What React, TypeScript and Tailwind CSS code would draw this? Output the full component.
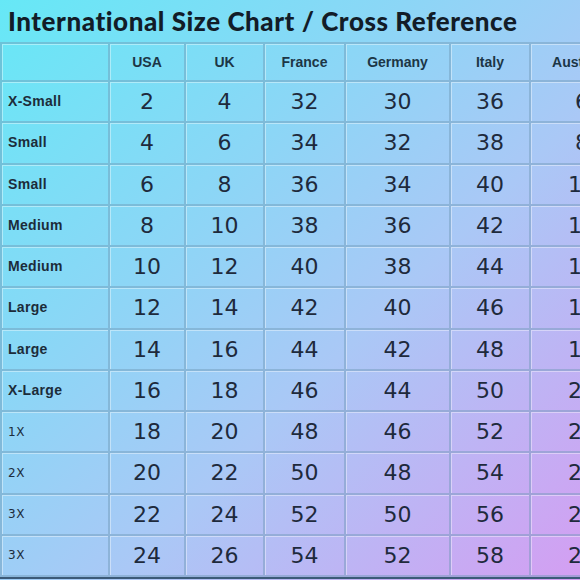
import React from "react";

const columns = ["USA", "UK", "France", "Germany", "Italy", "Australia"];

const rows: [string, number[]][] = [
  ["X-Small", [2, 4, 32, 30, 36, 6]],
  ["Small", [4, 6, 34, 32, 38, 8]],
  ["Small", [6, 8, 36, 34, 40, 10]],
  ["Medium", [8, 10, 38, 36, 42, 12]],
  ["Medium", [10, 12, 40, 38, 44, 14]],
  ["Large", [12, 14, 42, 40, 46, 16]],
  ["Large", [14, 16, 44, 42, 48, 18]],
  ["X-Large", [16, 18, 46, 44, 50, 20]],
  ["1X", [18, 20, 48, 46, 52, 22]],
  ["2X", [20, 22, 50, 48, 54, 24]],
  ["3X", [22, 24, 52, 50, 56, 26]],
  ["3X", [24, 26, 54, 52, 58, 28]],
];

const cell =
  "flex items-center border-r-2 border-b-2 border-[#6f98b6]/45 shadow-[inset_1px_1px_0_rgba(255,255,255,0.4)]";

export default function App() {
  return (
    <div className="w-[580px] h-[580px] overflow-hidden bg-[linear-gradient(135deg,#66e8f6_0%,#8cd6f6_35%,#aac8f6_60%,#d49ef2_100%)]">
      <div className="h-[42px] flex items-center pl-2">
        <h1 className="font-['Lato','Noto_Sans',sans-serif] font-black text-[26px] text-[#121c28] tracking-[0.55px] whitespace-nowrap">
          International Size Chart / Cross Reference
        </h1>
      </div>
      <div className="grid grid-cols-[108px_76px_79px_81px_105px_80px_104px] grid-rows-[38px_repeat(12,41.25px)] w-max border-t-2 border-l-2 border-[#6f98b6]/45 shadow-[0_2px_0_#3c5a78]">
        <div className={cell} />
        {columns.map((c) => (
          <div
            key={c}
            className={`${cell} justify-center font-['Liberation_Sans',Arial,sans-serif] font-bold text-[14px] text-[#1c3646]`}
          >
            {c}
          </div>
        ))}
        {rows.map(([label, values], i) => (
          <React.Fragment key={i}>
            {/^\dX$/.test(label) ? (
              <div
                className={`${cell} pl-[6px] font-['DejaVu_Sans',sans-serif] text-[12px] text-[#1c2c3c] tracking-[0.5px]`}
              >
                {label}
              </div>
            ) : (
              <div
                className={`${cell} pl-[6px] font-['Liberation_Sans',Arial,sans-serif] font-bold text-[14px] text-[#1c2c3a] tracking-[0.3px]`}
              >
                {label}
              </div>
            )}
            {values.map((v, j) => (
              <div
                key={j}
                className={`${cell} justify-center font-['DejaVu_Sans',sans-serif] text-[22px] text-[#1e2a3c]`}
              >
                {v}
              </div>
            ))}
          </React.Fragment>
        ))}
      </div>
    </div>
  );
}
